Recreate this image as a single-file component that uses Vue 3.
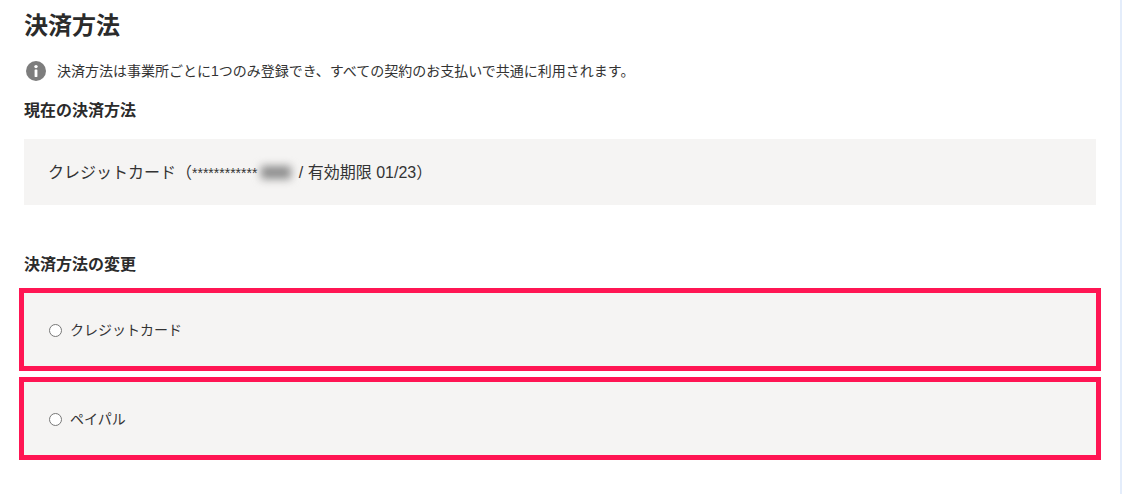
<template>
  <div class="page">
    <h1 class="title">決済方法</h1>
    <p class="note">
      <svg class="note-icon" width="20" height="20" viewBox="0 0 20 20">
        <circle cx="10" cy="10" r="10" fill="#7d7d7d" />
        <circle cx="10" cy="5.6" r="1.7" fill="#fff" />
        <rect x="8.6" y="8.6" width="2.8" height="7.4" rx="0.4" fill="#fff" />
      </svg>
      <span>決済方法は事業所ごとに1つのみ登録でき、すべての契約のお支払いで共通に利用されます。</span>
    </p>

    <h2 class="heading">現在の決済方法</h2>
    <div class="current">
      <span>クレジットカード（<span class="stars">************</span><span class="masked"></span> / 有効期限 01/23）</span>
    </div>

    <h2 class="heading change">決済方法の変更</h2>
    <div class="methods">
      <label v-for="m in methods" :key="m" class="method">
        <input type="radio" name="method" class="radio" />
        <span class="method-name">{{ m }}</span>
      </label>
    </div>
  </div>
</template>

<script setup>
const methods = ['クレジットカード', 'ペイパル']
</script>

<style scoped>
.page {
  box-sizing: border-box;
  width: 1122px;
  height: 494px;
  padding: 10px 24px 0 24px;
  background: #fff;
  border-right: 2px solid #e4edfb;
  color: #333;
  font-family: "Liberation Sans", "Noto Sans CJK JP", sans-serif;
  overflow: hidden;
}

.title {
  margin: 0;
  font-size: 24px;
  line-height: 32px;
  font-weight: 700;
  color: #2b2b2b;
}

.note {
  display: flex;
  align-items: center;
  gap: 11px;
  margin: 19px 0 0 2px;
  font-size: 14px;
  line-height: 20px;
}

.note-icon {
  flex: none;
}

.heading {
  margin: 19px 0 0;
  font-size: 16px;
  line-height: 22px;
  font-weight: 700;
  color: #2b2b2b;
}

.change {
  margin-top: 49px;
}

.current {
  box-sizing: border-box;
  display: flex;
  align-items: center;
  height: 66px;
  margin-top: 17px;
  padding: 0 0 2px 24px;
  background: #f5f4f3;
  font-size: 16px;
  white-space: pre;
}

.stars {
  font-size: 14px;
}

.masked {
  display: inline-block;
  width: 30px;
  height: 13px;
  margin: 0 3px 0 4px;
  background: #8c8c8c;
  filter: blur(4px);
  vertical-align: -1px;
}

.methods {
  display: flex;
  flex-direction: column;
  gap: 6px;
  margin: 12px -5px 0;
}

.method {
  box-sizing: border-box;
  display: flex;
  align-items: center;
  gap: 8px;
  height: 83px;
  padding-left: 25px;
  border: 5px solid #ff1553;
  background: #f5f4f3;
  font-size: 14px;
}

.method-name {
  margin-bottom: 2px;
}

.radio {
  appearance: none;
  box-sizing: border-box;
  width: 13px;
  height: 13px;
  margin: 1px 0 0;
  border: 1px solid #777;
  border-radius: 50%;
  background: #fff;
}
</style>
